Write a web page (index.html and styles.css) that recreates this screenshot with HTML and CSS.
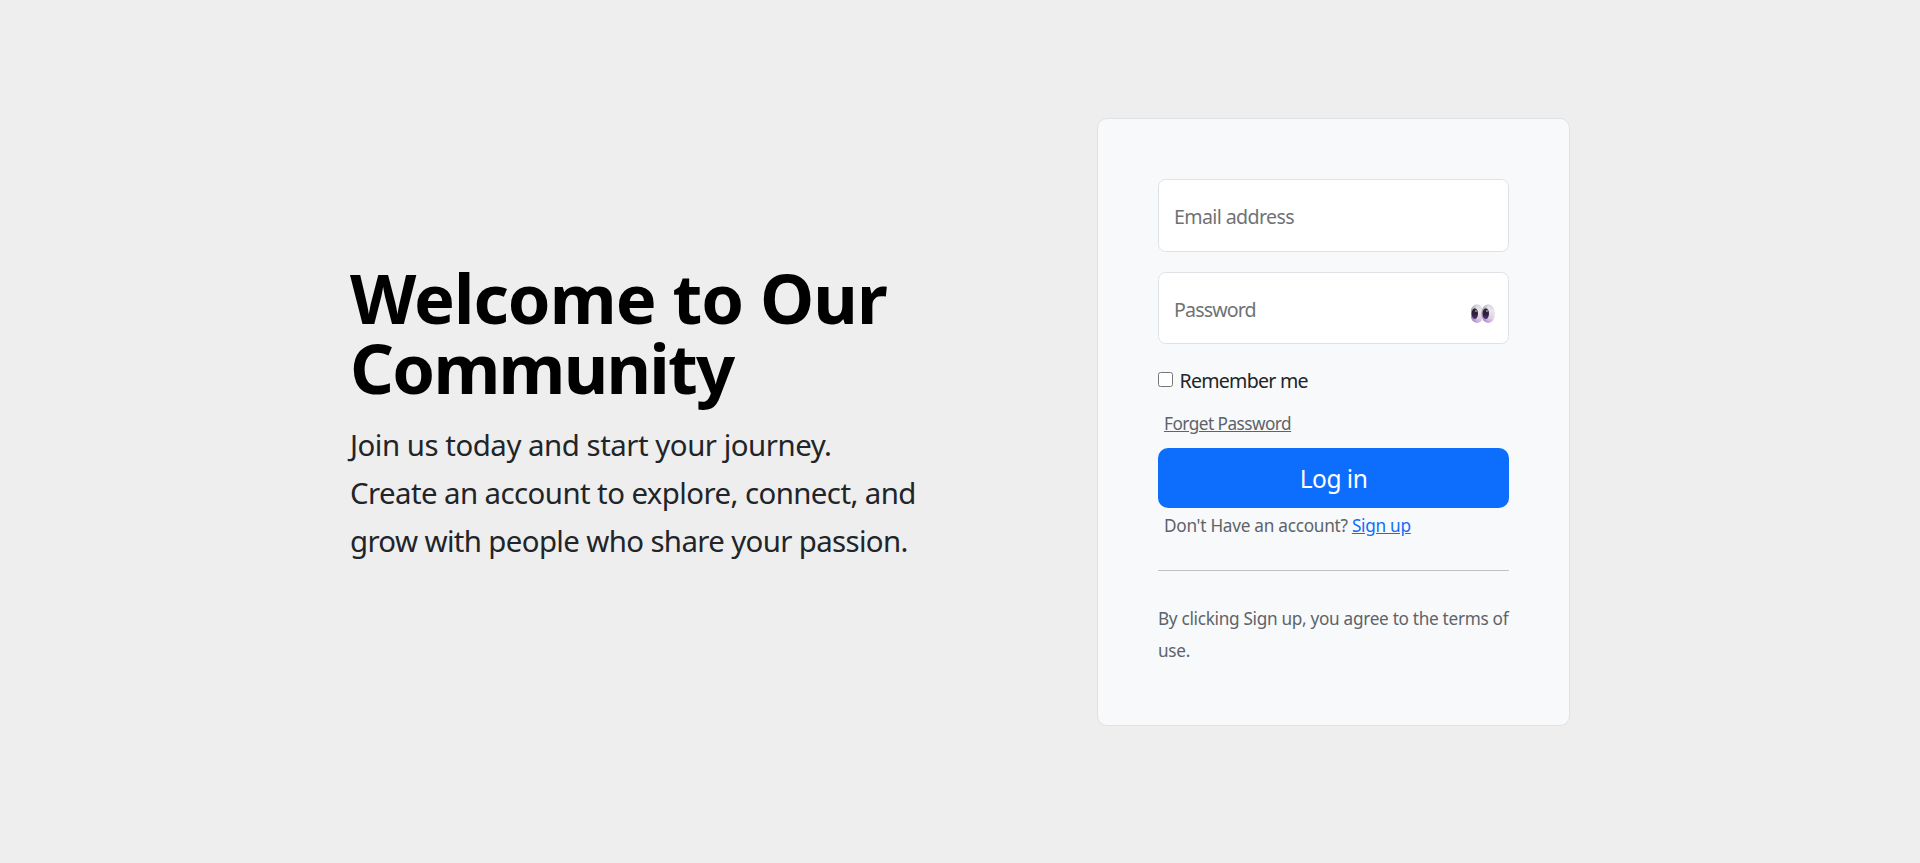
FILE: index.html
```html
<!DOCTYPE html>
<html lang="en">
<head>
<meta charset="utf-8">
<title>Log in</title>
<link rel="stylesheet" href="styles.css">
</head>
<body>
<main class="page">
  <section class="hero">
    <h1 class="hero-title"><span class="title-top">Welcome to Our</span><br><span class="title-bottom">Community</span></h1>
    <p class="hero-text"><span class="line-one">Join us today and start your journey.</span><br><span class="line-two">Create an account to explore, connect, and</span><br><span class="line-three">grow with people who share your passion.</span></p>
  </section>
  <form class="card">
    <div class="field field-email"><span class="label-email">Email address</span></div>
    <div class="field field-password">
      <span class="label-password">Password</span>
      <svg class="eyes" viewBox="0 0 24 20" width="24" height="20">
        <defs>
          <linearGradient id="white" x1="0.6" y1="0" x2="0.4" y2="1"><stop offset="0" stop-color="#d9d3da"/><stop offset="0.3" stop-color="#ece6ee"/><stop offset="0.7" stop-color="#ddd0e3"/><stop offset="1" stop-color="#c095de"/></linearGradient>
          <linearGradient id="shade" x1="0" y1="0" x2="1" y2="0"><stop offset="0" stop-color="#85798c" stop-opacity="0.75"/><stop offset="0.5" stop-color="#85798c" stop-opacity="0"/></linearGradient>
          <linearGradient id="pupil" x1="0" y1="0" x2="0" y2="1"><stop offset="0" stop-color="#2a2730"/><stop offset="0.55" stop-color="#2c1f3c"/><stop offset="1" stop-color="#5b3480"/></linearGradient>
        </defs>
        <ellipse cx="6" cy="9.6" rx="6.7" ry="9.4" fill="url(#white)"/>
        <ellipse cx="6" cy="9.6" rx="6.7" ry="9.4" fill="url(#shade)"/>
        <ellipse cx="17.2" cy="9.6" rx="6.8" ry="9.4" fill="url(#white)"/>
        <ellipse cx="17.2" cy="9.6" rx="6.8" ry="9.4" fill="url(#shade)"/>
        <ellipse cx="3.8" cy="9.6" rx="3.2" ry="5.4" fill="url(#pupil)"/>
        <ellipse cx="14.8" cy="9.6" rx="3.2" ry="5.4" fill="url(#pupil)"/>
        <circle cx="5" cy="7" r="0.9" fill="#a9a4b0"/><circle cx="16" cy="7" r="0.9" fill="#a9a4b0"/>
      </svg>
    </div>
    <label class="remember"><input type="checkbox" class="check"><span>Remember me</span></label>
    <a class="forgot">Forget Password</a>
    <button type="button" class="submit">Log in</button>
    <p class="signup">Don't Have an account? <a class="signup-link">Sign up</a></p>
    <hr class="rule">
    <p class="terms">By clicking Sign up, you agree to the terms of<br>use.</p>
  </form>
</main>
</body>
</html>
```
FILE: styles.css
```css
* { box-sizing: border-box; }
body { margin: 0; background: #eee; color: #212529; font-family: "Noto Sans", sans-serif; }
.page { display: flex; align-items: flex-start; height: 863px; padding: 118px 350px 0; justify-content: space-between; }
.hero { padding-top: 145px; white-space: nowrap; }
.hero-title { margin: 0 0 18px; color: #000; font-size: 68.6px; line-height: 70px; font-weight: 700; }
.title-top { letter-spacing: -0.97px; }
.title-bottom { letter-spacing: -1.75px; }
.hero-text { margin: 0; font-size: 29.4px; line-height: 48px; }
.line-one { letter-spacing: -0.47px; }
.line-two { letter-spacing: -0.57px; }
.line-three { letter-spacing: -0.63px; }
.card { display: flex; flex-direction: column; width: 473px; height: 608px; padding: 60px; border: 1px solid #dee2e6; border-radius: 10px; background: #f8f9fa; white-space: nowrap; }
.card > * { flex: none; }
.field { display: flex; align-items: center; justify-content: space-between; padding: 3px 13px 0 15px; border: 1px solid #dee2e6; border-radius: 7.5px; background: #fff; color: #6f7275; font-size: 19.6px; line-height: 30px; }
.field-email { height: 73px; margin-bottom: 20px; }
.field-password { height: 72px; }
.label-email { letter-spacing: -0.62px; }
.label-password { letter-spacing: -0.85px; }
.eyes { margin-top: 9px; }
.remember { display: flex; margin-top: 22px; font-size: 19.6px; line-height: 30px; letter-spacing: -0.75px; }
.check { width: 15px; height: 15px; margin: 6px 6.5px 0 0; }
.forgot { margin: 14px 0 0 6px; color: #5c636a; font-size: 17.2px; line-height: 28px; letter-spacing: -0.52px; text-decoration: underline; }
.submit { height: 60px; margin-top: 10px; padding: 2px 0 0; border: 0; border-radius: 10px; background: #0d6efd; color: #fff; font: 24.5px/38px "Noto Sans", sans-serif; letter-spacing: -0.5px; }
.signup { margin: 4px 0 0 6px; color: #5c636a; font-size: 17.2px; line-height: 28px; letter-spacing: -0.26px; }
.signup-link { color: #0d6efd; text-decoration: underline; }
.rule { width: 100%; height: 1px; margin: 30px 0 32px; border: 0; background: #c0c2c4; }
.terms { margin: 0; color: #5c636a; font-size: 17.2px; line-height: 32px; letter-spacing: -0.3px; }
```
